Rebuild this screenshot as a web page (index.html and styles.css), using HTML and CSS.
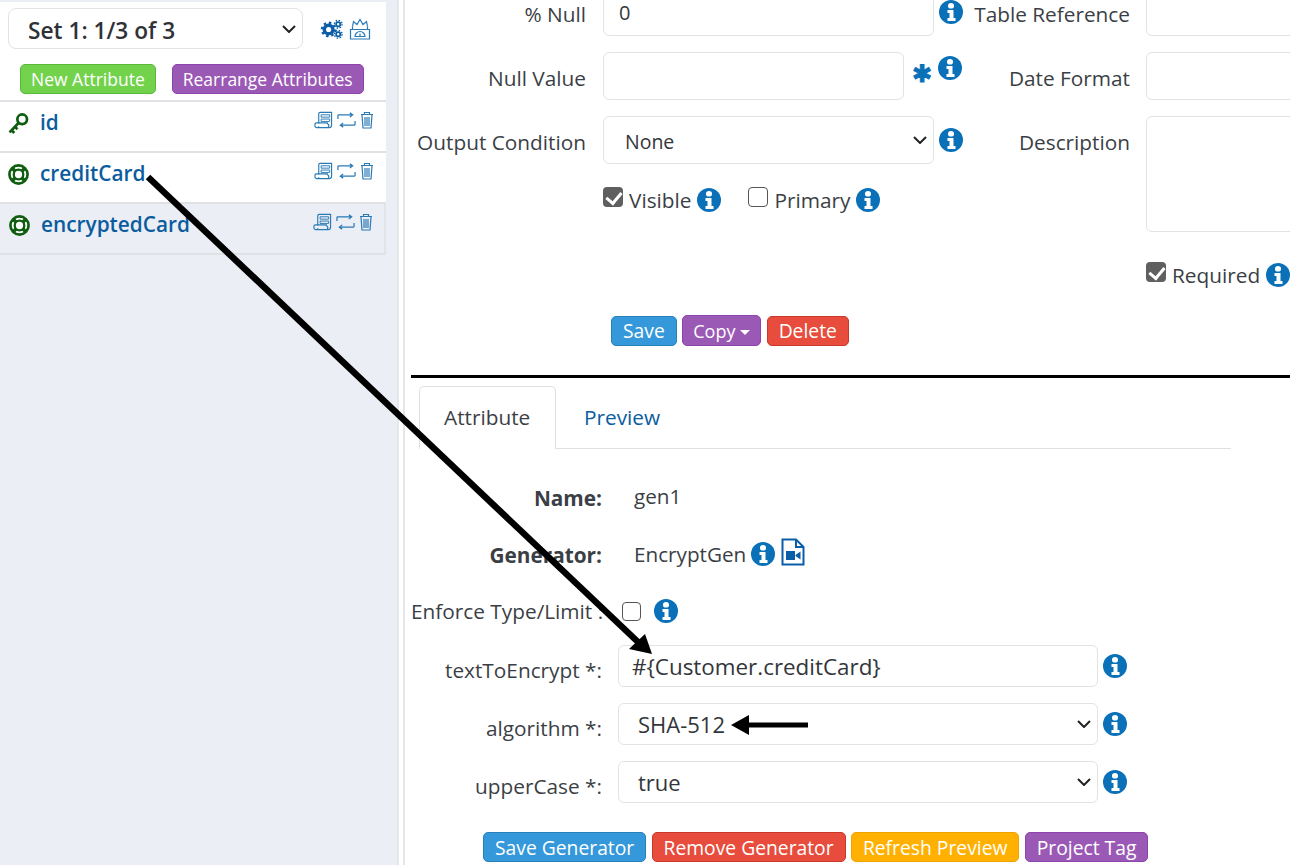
FILE: index.html
```html
<!DOCTYPE html>
<html lang="en">
<head>
<meta charset="utf-8">
<title>Attribute generator</title>
<link rel="stylesheet" href="styles.css">
</head>
<body>
<svg width="0" height="0" class="defs">
  <defs>
    <symbol id="i-info" viewBox="0 0 24 24">
      <circle cx="12" cy="12" r="12" fill="#0a70b8"/>
      <path d="M9 5.500a3 2.600 0 0 1 6 0v.4a3 2.600 0 0 1-6 0zM8.500 10h6v8h2v3h-8v-3h2v-5h-2z" fill="#fff"/>
    </symbol>
    <symbol id="i-book" viewBox="0 0 20 18">
      <path d="M5 13V2.500A1.500 1.500 0 0 1 6.500 1H18.500V14.500A2.500 2.500 0 0 1 16 17H3A2 2 0 0 1 1 15V13.500A1.500 1.500 0 0 1 2.500 12H5M5 15.500A1.500 1.500 0 0 1 3 17M3 17H13A2 2 0 0 0 14 13V12H2.500" fill="none" stroke="#2a7ab5" stroke-width="1.200"/>
      <path d="M7.500 3.500H16.500V6H7.500zM7.500 8H16.500V10.500H7.500z" fill="none" stroke="#2a7ab5" stroke-width="1"/>
    </symbol>
    <symbol id="i-swap" viewBox="0 0 20 16">
      <path d="M1 7V3.500A1 1 0 0 1 2 2.500H16M13.500 .5L16.500 2.500L13.500 5M19 9V12.500A1 1 0 0 1 18 13.500H4M6.500 11L3.500 13.500L6.500 15.500" fill="none" stroke="#2a7ab5" stroke-width="1.300"/>
    </symbol>
    <symbol id="i-trash" viewBox="0 0 14 18">
      <path d="M1 3.500H13M4.500 3V1.500H9.500V3M2 4L3 17H11L12 4" fill="none" stroke="#2a7ab5" stroke-width="1.200"/>
      <path d="M5 6V15M7 6V15M9 6V15" stroke="#2a7ab5" stroke-width="1.200"/>
    </symbol>
    <symbol id="i-ring" viewBox="0 0 22 22">
      <circle cx="11" cy="11" r="9.500" fill="#fff" stroke="#0f5d0f" stroke-width="2.800"/>
      <circle cx="11" cy="11" r="5" fill="#fff" stroke="#0f5d0f" stroke-width="2.400"/>
      <path d="M4.500 4.500L7.500 7.500M17.500 4.500L14.500 7.500M4.500 17.500L7.500 14.500M17.500 17.500L14.500 14.500" stroke="#0f5d0f" stroke-width="3.800"/>
    </symbol>
  </defs>
</svg>

<aside class="sidebar">
  <div class="sidebar-head">
    <div class="set-row">
      <select class="set-select chev"><option>Set 1: 1/3 of 3</option></select>
      <svg class="gears" viewBox="0 0 24 20" aria-hidden="true">
        <g fill="none" stroke="#0a5ea8">
          <circle cx="9" cy="10.500" r="4.500" stroke-width="3.600"/>
          <circle cx="9" cy="10.500" r="7" stroke-width="2.400" stroke-dasharray="2.600 2.900"/>
          <circle cx="19" cy="5" r="2.200" stroke-width="1.800"/>
          <circle cx="19" cy="5" r="4" stroke-width="1.500" stroke-dasharray="1.500 1.640"/>
          <circle cx="19" cy="15.500" r="2.200" stroke-width="1.800"/>
          <circle cx="19" cy="15.500" r="4" stroke-width="1.500" stroke-dasharray="1.500 1.640"/>
        </g>
      </svg>
      <svg class="gauge" viewBox="0 0 22 22" aria-hidden="true">
        <g fill="none" stroke="#2a7ab5" stroke-width="1.200">
          <path d="M1.500 11.500H20.500V21H1.500zM3.500 11.500V8.500M18.500 11.500V8.500"/>
          <path d="M3.500 8.500L4.500 3.500L8 6.500L11 1.500L14 6.500L17.500 3.500L18.500 8.500"/>
          <path d="M6 18.500A5 5 0 0 1 16 18.500zM11 18V15.500"/>
        </g>
      </svg>
    </div>
    <div class="attr-actions">
      <button class="btn btn-green">New Attribute</button>
      <button class="btn btn-purple">Rearrange Attributes</button>
    </div>
  </div>
  <ul class="attr-list">
    <li class="attr">
      <svg class="attr-icon key" viewBox="0 0 20 20" aria-hidden="true">
        <circle cx="13.500" cy="6" r="4.600" fill="none" stroke="#0f5d0f" stroke-width="2.600"/>
        <path d="M10 9.500L1.500 18.500M3.500 16.500L6 19M6.500 13L9 15.500" fill="none" stroke="#0f5d0f" stroke-width="2.600"/>
      </svg>
      <span class="attr-name">id</span>
      <span class="attr-tools">
        <svg class="t-book"><use href="#i-book"/></svg><svg class="t-swap"><use href="#i-swap"/></svg><svg class="t-trash"><use href="#i-trash"/></svg>
      </span>
    </li>
    <li class="attr">
      <svg class="attr-icon"><use href="#i-ring"/></svg>
      <span class="attr-name">creditCard</span>
      <span class="attr-tools">
        <svg class="t-book"><use href="#i-book"/></svg><svg class="t-swap"><use href="#i-swap"/></svg><svg class="t-trash"><use href="#i-trash"/></svg>
      </span>
    </li>
    <li class="attr attr-active">
      <svg class="attr-icon"><use href="#i-ring"/></svg>
      <span class="attr-name">encryptedCard</span>
      <span class="attr-tools">
        <svg class="t-book"><use href="#i-book"/></svg><svg class="t-swap"><use href="#i-swap"/></svg><svg class="t-trash"><use href="#i-trash"/></svg>
      </span>
    </li>
  </ul>
</aside>

<main class="main">
  <div class="main-inner">
    <section class="top-form">
      <div class="col-left">
        <div class="row">
          <label class="lbl">% Null</label>
          <input class="field w-full" value="0">
          <svg class="info info-top"><use href="#i-info"/></svg>
        </div>
        <div class="row">
          <label class="lbl">Null Value</label>
          <input class="field w-short">
          <span class="star">✱</span>
          <svg class="info info-top info-star"><use href="#i-info"/></svg>
        </div>
        <div class="row">
          <label class="lbl">Output Condition</label>
          <select class="field w-full sel-none chev"><option>None</option></select>
          <svg class="info info-top"><use href="#i-info"/></svg>
        </div>
        <div class="checks">
          <span class="check on"></span><span class="check-text">Visible</span>
          <svg class="info"><use href="#i-info"/></svg>
          <span class="check off"></span><span class="check-text">Primary</span>
          <svg class="info"><use href="#i-info"/></svg>
        </div>
      </div>
      <div class="col-right">
        <div class="row">
          <label class="lbl lbl-right">Table Reference</label>
          <input class="field w-right">
        </div>
        <div class="row">
          <label class="lbl lbl-right">Date Format</label>
          <input class="field w-right">
        </div>
        <div class="row row-tall">
          <label class="lbl lbl-right">Description</label>
          <textarea class="field w-right area"></textarea>
        </div>
        <div class="checks required">
          <span class="check on"></span><span class="check-text">Required</span>
          <svg class="info"><use href="#i-info"/></svg>
        </div>
      </div>
    </section>

    <div class="form-actions">
      <button class="btn btn-blue btn-lg">Save</button>
      <button class="btn btn-purple btn-copy">Copy <span class="caret"></span></button>
      <button class="btn btn-red btn-lg">Delete</button>
    </div>

    <hr class="rule">

    <nav class="tabs">
      <span class="tab tab-on">Attribute</span>
      <span class="tab">Preview</span>
    </nav>

    <section class="gen-form">
      <div class="g-row g-name">
        <span class="g-lbl strong">Name:</span>
        <span class="g-val g-val-up">gen1</span>
      </div>
      <div class="g-row g-gen">
        <span class="g-lbl strong">Generator:</span>
        <span class="g-val">EncryptGen</span>
        <svg class="info"><use href="#i-info"/></svg>
        <svg class="doc" viewBox="0 0 24 28" aria-hidden="true">
          <path d="M1.500 1.500H15L22.500 9V26.500H1.500z" fill="none" stroke="#0a5ea8" stroke-width="2"/>
          <path d="M15 1.500V9H22.500" fill="none" stroke="#0a5ea8" stroke-width="2"/>
          <path d="M5 13H14V22H5zM14.500 17L19.500 13.500V21.500L14.500 18z" fill="#0a5ea8"/>
        </svg>
      </div>
      <div class="g-row g-enforce">
        <span class="g-lbl">Enforce Type/Limit :</span>
        <span class="check off"></span>
        <svg class="info"><use href="#i-info"/></svg>
      </div>
      <div class="g-row g-input">
        <span class="g-lbl">textToEncrypt *:</span>
        <input class="field g-field" value="#{Customer.creditCard}">
        <svg class="info"><use href="#i-info"/></svg>
      </div>
      <div class="g-row g-input">
        <span class="g-lbl">algorithm *:</span>
        <select class="field g-field g-select chev"><option>SHA-512</option></select>
        <svg class="info"><use href="#i-info"/></svg>
      </div>
      <div class="g-row g-input">
        <span class="g-lbl">upperCase *:</span>
        <select class="field g-field g-select chev"><option>true</option></select>
        <svg class="info"><use href="#i-info"/></svg>
      </div>
      <div class="gen-actions">
        <button class="btn btn-blue btn-lg">Save Generator</button>
        <button class="btn btn-red btn-lg">Remove Generator</button>
        <button class="btn btn-amber btn-lg">Refresh Preview</button>
        <button class="btn btn-purple btn-lg">Project Tag</button>
      </div>
    </section>
  </div>
</main>

<svg class="annotations" viewBox="0 0 1290 865" aria-hidden="true">
  <path d="M148 177L638 642" stroke="#000" stroke-width="6.500" fill="none"/>
  <path d="M652 654L629 649L645 634z" fill="#000"/>
  <path d="M745 725H808" stroke="#000" stroke-width="5" fill="none"/>
  <path d="M731 725L749 715V735z" fill="#000"/>
</svg>
</body>
</html>
```
FILE: styles.css
```css
* { box-sizing: border-box; }
html, body { margin: 0; height: 865px; overflow: hidden; }
body {
  display: flex;
  font-family: "Open Sans", "Liberation Sans", sans-serif;
  font-size: 20.800px;
  color: #3b3f45;
  background: #ebeef5;
  position: relative;
}
.defs { position: absolute; }

.chev {
  appearance: none;
  background: #fff url("data:image/svg+xml,%3Csvg xmlns='http://www.w3.org/2000/svg' viewBox='0 0 14 8'%3E%3Cpath d='M1 1L7 7L13 1' fill='none' stroke='%23222' stroke-width='2'/%3E%3C/svg%3E") no-repeat right 6px center / 14px 8px;
}

.sidebar { width: 386px; flex: none; background: #ebeef5; }
.sidebar-head { background: #fff; margin-top: 2px; height: 98px; padding: 6px 0 0 8px; }
.set-row { display: flex; align-items: center; }
.set-select {
  width: 295px; height: 41px; padding: 3px 0 0 19px;
  border: 1.500px solid #e3e3e3; border-radius: 8px;
  font: 600 22.700px "Open Sans", sans-serif; color: #2f3236;
}
.gears { width: 23px; height: 20px; margin-left: 17px; }
.gauge { width: 22px; height: 24px; margin-left: 6px; }
.attr-actions { display: flex; gap: 16px; margin: 15px 0 0 12px; }

.btn {
  height: 30px; padding: 0 10px; border-radius: 5px; border: 1px solid;
  font: 400 17.500px "Open Sans", sans-serif; color: #fff; white-space: nowrap;
}
.btn-lg { font-size: 19.300px; padding: 0 11px; }
.btn-copy { font-size: 18px; height: 31px; }
.btn-green { background: #72d24c; border-color: #5bb83a; }
.btn-purple { background: #9b59b6; border-color: #8e44ad; }
.btn-blue { background: #3498db; border-color: #2a80b9; }
.btn-red { background: #e74c3c; border-color: #c9392b; }
.btn-amber { background: #ffb000; border-color: #eda300; }
.caret {
  display: inline-block; width: 0; height: 0; vertical-align: middle;
  border: 5px solid transparent; border-top-color: #fff; border-bottom: 0;
}

.attr-list { list-style: none; margin: 0; padding: 0; }
.attr {
  height: 51px; display: flex; align-items: flex-start; background: #fff;
  border-top: 2px solid #dfe1e5; padding: 7px 12px 0 8px;
}
.attr-active {
  background: #ebeef5; height: 53px; padding-left: 9px;
  border-bottom: 2px solid #dfe1e5; border-right: 2px solid #e2e4e9; padding-right: 11px;
}
.attr-icon { width: 21px; height: 21px; flex: none; margin-top: 4px; }
.attr-name { margin-left: 11px; color: #0b5c9e; font-weight: 600; line-height: 26px; }
.attr-tools { margin: 1px 0 0 auto; display: flex; align-items: center; gap: 4px; height: 20px; }
.t-book { width: 19px; height: 18px; }
.t-swap { width: 19px; height: 16px; }
.t-trash { width: 14px; height: 18px; }

.main {
  position: absolute; left: 397px; top: 0; width: 893px; height: 865px;
  background: #fff; border-left: 2px solid #e4e6ea; overflow: hidden;
}
.main-inner { margin-left: 4px; height: 100%; border-left: 2px solid #e4e6ea; padding-left: 6px; overflow: hidden; }
.top-form { display: flex; margin-top: -12px; height: 312px; }
.col-left { width: 551px; flex: none; }
.col-right { flex: none; }
.row { display: flex; align-items: flex-start; height: 48px; margin-bottom: 16px; }
.row-tall { height: 116px; margin-bottom: 0; }
.lbl { width: 175px; text-align: right; line-height: 52px; flex: none; white-space: nowrap; }
.lbl-right { width: 168px; margin-right: 16px; }
.field {
  height: 48px; border: 1.500px solid #e3e3e3; border-radius: 6px; background-color: #fff;
  font: 400 20px "Open Sans", sans-serif; color: #33363a; padding: 0 15px; margin-left: 17px;
}
.col-right .field { margin-left: 0; }
.w-full { width: 331px; flex: none; }
.w-short { width: 301px; flex: none; }
.w-right { width: 300px; flex: none; }
.area { height: 116px; resize: none; }
.sel-none { padding: 2px 0 0 21px; font-size: 19.500px; }
.info { width: 24px; height: 24px; flex: none; }
.info-top { margin: 12px 0 0 5px; }
.info-star { margin-top: 4px; margin-left: 4px; }
.star { color: #0a70b8; font-size: 24px; line-height: 1; margin: 9px 4px 0 8px; width: 18px; -webkit-text-stroke: .8px #0a70b8; }
.checks { display: flex; align-items: center; margin-left: 192px; height: 24px; margin-top: 24px; }
.check { width: 20px; height: 20px; border-radius: 4px; flex: none; display: block; position: relative; margin-top: -6px; }
.check.off { border: 1.500px solid #555; background: #fff; }
.check.on { background: #5f5f5f; }
.check.on::after {
  content: ""; position: absolute; left: 6px; top: 2px; width: 7px; height: 12px;
  border: solid #fff; border-width: 0 3px 3px 0; transform: rotate(40deg);
}
.check-text { margin: 0 6px 0 6px; }
.check.off { margin-left: 27px; }
.required { margin: 31px 0 0 184px; justify-content: flex-start; }
.required .check { margin-left: 0; }

.form-actions { display: flex; gap: 5.500px; margin: 15px 0 0 200px; align-items: center; }
.rule { height: 3px; background: #000; border: 0; margin: 29px 0 0 0; }
.tabs { display: flex; width: 812px; height: 63px; margin: 8px 0 0 8px; border-bottom: 1.500px solid #e0e0e0; }
.tab { padding: 17px 25px 0 28px; color: #0b5c9e; height: 63px; }
.tab-on {
  width: 137px; color: #3b3f45; background: #fff;
  border: 1.500px solid #e0e0e0; border-bottom: 0; border-radius: 5px 5px 0 0; padding: 16px 0 0 24px;
}
.gen-form { margin-top: 0; }
.g-row { display: flex; align-items: center; }
.g-lbl { width: 191px; text-align: right; flex: none; white-space: nowrap; }
.strong { font-weight: 700; }
.g-val { margin-left: 32px; font-size: 20.700px; }
.g-val-up { margin-top: -4px; }
.g-name { margin-top: 30px; height: 38px; }
.g-gen { margin-top: 19px; height: 38px; }
.g-gen .g-val { margin-top: -2px; }
.g-gen .info { margin: -3px 0 0 5px; }
.doc { width: 24px; height: 28px; margin: -6px 0 0 6px; }
.g-enforce { margin-top: 18px; height: 38px; }
.g-enforce .check { margin: 0 0 0 20px; width: 19px; height: 19px; }
.g-enforce .info { margin-left: 13px; }
.g-input { height: 42px; margin-bottom: 16px; }
.g-enforce + .g-input { margin-top: 15px; }
.g-input .g-lbl { margin-top: 8px; }
.g-field { width: 480px; height: 42px; margin-left: 16px; font-size: 22.400px; padding: 0 13px; flex: none; }
.g-select { font-size: 22px; padding: 0 0 0 19px; }
.g-input .info { margin-left: 5px; }
.gen-actions { display: flex; gap: 5.300px; margin: 29px 0 0 72px; }

.annotations { position: absolute; left: 0; top: 0; width: 1290px; height: 865px; pointer-events: none; }
```
